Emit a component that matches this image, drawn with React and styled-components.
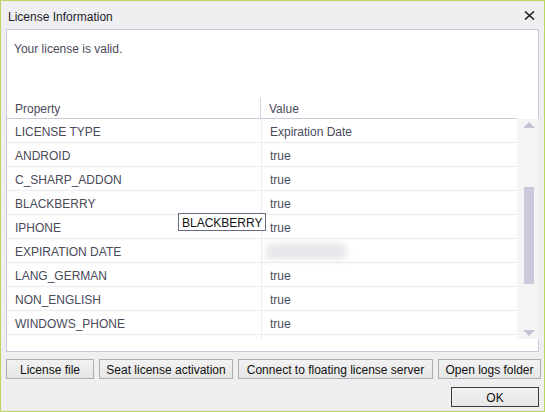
import styled, { createGlobalStyle } from 'styled-components'

const Global = createGlobalStyle`
  html, body {
    margin: 0;
    padding: 0;
    background: #efeff2;
  }
  * { box-sizing: border-box; }
`

const Window = styled.div`
  width: 545px;
  height: 412px;
  display: flex;
  flex-direction: column;
  border: 1px solid #b8d660;
  background: #efeff2;
  font-family: 'Liberation Sans', Arial, sans-serif;
  font-size: 12px;
  color: #4a4a5a;
`

const TitleBar = styled.div`
  height: 28px;
  display: flex;
  align-items: center;
  justify-content: space-between;
  padding: 3px 9px 0 7px;
  color: #1c1c2a;
  font-size: 12px;

  svg { margin-top: -3px; }
`

const Panel = styled.div`
  margin: 0 5px;
  height: 323px;
  border: 1px solid #c9c9d9;
  background: #fff;
  display: flex;
  flex-direction: column;
`

const Message = styled.div`
  height: 68px;
  padding: 12px 7px 0;
  line-height: 14px;
`

const Table = styled.div`
  display: grid;
  grid-template-columns: 510px 22px;
  grid-template-rows: 21px 220px;
  position: relative;
`

const Header = styled.div`
  display: grid;
  grid-template-columns: 254px 1fr;
  border-bottom: 1px solid #c9c9d9;
`

const HeaderCell = styled.div`
  display: flex;
  align-items: center;
  padding: 1px 0 0 8px;
  border-right: ${p => (p.$first ? '1px solid #d6d6e2' : 'none')};
  line-height: 14px;
`

const Body = styled.div`
  display: flex;
  flex-direction: column;
  background: linear-gradient(to right, transparent 254px, #ececf0 254px, #ececf0 255px, transparent 255px);
`

const Row = styled.div`
  height: 24px;
  display: grid;
  grid-template-columns: 254px 1fr;
  border-bottom: 1px solid #ececf0;
`

const Cell = styled.div`
  display: flex;
  align-items: center;
  padding-left: ${p => (p.$value ? 9 : 8)}px;
  padding-top: 2px;
`

const Blur = styled.div`
  width: 80px;
  height: 15px;
  margin-left: -4px;
  background: #e4e4e9;
  filter: blur(4px);
  border-radius: 4px;
`

const Scrollbar = styled.div`
  grid-column: 2;
  grid-row: 2;
  background: #f4f4f5;
  display: flex;
  flex-direction: column;
  align-items: center;
  padding-left: 1px;
`

const Arrow = styled.div`
  width: 0;
  height: 0;
  border-left: 6px solid transparent;
  border-right: 6px solid transparent;
  ${p => (p.$down
    ? 'border-top: 6px solid #c3c3d1; margin-top: auto; margin-bottom: 3px;'
    : 'border-bottom: 6px solid #c3c3d1; margin-top: 3px;')}
`

const Thumb = styled.div`
  width: 10px;
  height: 97px;
  margin-top: 59px;
  background: #c9c9d9;
`

const Tooltip = styled.div`
  position: absolute;
  left: 171px;
  top: 115px;
  height: 18px;
  padding: 1px 3px 0;
  display: flex;
  align-items: center;
  border: 1px solid #6c6c80;
  background: #fff;
  color: #111;
  line-height: 14px;
`

const ButtonRow = styled.div`
  display: flex;
  gap: 5px;
  padding: 0 5px;
  margin-top: ${p => p.$gap}px;
  justify-content: ${p => (p.$end ? 'flex-end' : 'flex-start')};
`

const Button = styled.button`
  height: 20px;
  padding: 1px 0 0;
  width: ${p => p.$w}px;
  border: 1px solid ${p => (p.$default ? '#3c3c3c' : '#adadad')};
  background: linear-gradient(#f2f2f2, #e6e6e6);
  font-family: 'Liberation Sans', Arial, sans-serif;
  font-size: 12px;
  color: #111;
  display: flex;
  align-items: center;
  justify-content: center;
  flex-shrink: 0;
`

const rows = [
  ['LICENSE TYPE', 'Expiration Date'],
  ['ANDROID', 'true'],
  ['C_SHARP_ADDON', 'true'],
  ['BLACKBERRY', 'true'],
  ['IPHONE', 'true'],
  ['EXPIRATION DATE', null],
  ['LANG_GERMAN', 'true'],
  ['NON_ENGLISH', 'true'],
  ['WINDOWS_PHONE', 'true'],
]

function CloseIcon () {
  return (
    <svg width="11" height="9" viewBox="0 0 11 9">
      <path d="M1 0.5 L10 8.5 M10 0.5 L1 8.5" stroke="#222" strokeWidth="1.6" />
    </svg>
  )
}

export default function App () {
  return (
    <Window>
      <Global />
      <TitleBar>
        <span>License Information</span>
        <CloseIcon />
      </TitleBar>

      <Panel>
        <Message>Your license is valid.</Message>
        <Table>
          <Header>
            <HeaderCell $first>Property</HeaderCell>
            <HeaderCell>Value</HeaderCell>
          </Header>
          <div />
          <Body>
            {rows.map(([name, value]) =>
              <Row key={name}>
                <Cell>{name}</Cell>
                <Cell $value>{value === null ? <Blur /> : value}</Cell>
              </Row>
            )}
          </Body>
          <Scrollbar>
            <Arrow />
            <Thumb />
            <Arrow $down />
          </Scrollbar>
          <Tooltip>BLACKBERRY</Tooltip>
        </Table>
      </Panel>

      <ButtonRow $gap={7}>
        <Button $w={88}>License file</Button>
        <Button $w={134}>Seat license activation</Button>
        <Button $w={195}>Connect to floating license server</Button>
        <Button $w={103}>Open logs folder</Button>
      </ButtonRow>
      <ButtonRow $gap={8} $end>
        <Button $w={88} $default>OK</Button>
      </ButtonRow>
    </Window>
  )
}
